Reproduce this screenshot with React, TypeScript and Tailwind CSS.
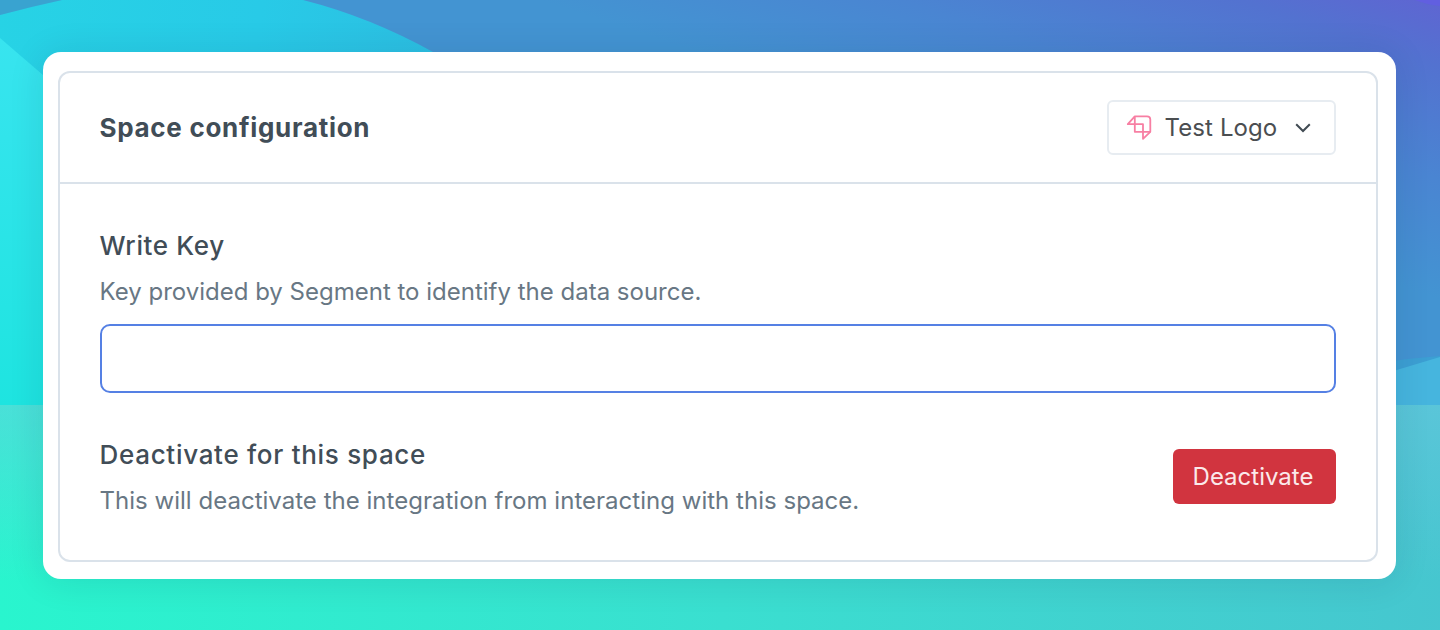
import React from "react";

function Backdrop() {
  return (
    <svg className="absolute inset-0 h-full w-full" viewBox="0 0 1440 630" preserveAspectRatio="none" aria-hidden="true">
      <defs>
        <linearGradient id="sky" gradientUnits="userSpaceOnUse" x1="1440" y1="0" x2="1350" y2="270">
          <stop offset="0" stopColor="#5f65d2" />
          <stop offset="0.22" stopColor="#5372d0" />
          <stop offset="0.6" stopColor="#4a85d2" />
          <stop offset="1" stopColor="#4394d2" />
        </linearGradient>
        <linearGradient id="arc" gradientUnits="userSpaceOnUse" x1="0" y1="0" x2="430" y2="60">
          <stop offset="0" stopColor="#27d3e5" />
          <stop offset="0.6" stopColor="#28cae7" />
          <stop offset="1" stopColor="#2cbfe2" />
        </linearGradient>
        <linearGradient id="side" gradientUnits="userSpaceOnUse" x1="0" y1="40" x2="0" y2="405">
          <stop offset="0" stopColor="#38e4ef" />
          <stop offset="1" stopColor="#1ee4e0" />
        </linearGradient>
        <linearGradient id="sea" gradientUnits="userSpaceOnUse" x1="0" y1="630" x2="1440" y2="520">
          <stop offset="0" stopColor="#29f5ce" />
          <stop offset="0.5" stopColor="#3adfd0" />
          <stop offset="1" stopColor="#46c6cf" />
        </linearGradient>
        <linearGradient id="haze" gradientUnits="userSpaceOnUse" x1="0" y1="405" x2="0" y2="580">
          <stop offset="0" stopColor="#76c4e6" stopOpacity="0.42" />
          <stop offset="1" stopColor="#76c4e6" stopOpacity="0" />
        </linearGradient>
      </defs>
      <rect width="1440" height="630" fill="url(#sky)" />
      <path d="M0 0H62L0 15Z" fill="#39a3d0" />
      <path d="M0 15Q30 7 62 0H303Q370 17 433 52L500 95V405H0Z" fill="url(#arc)" />
      <path d="M0 38L130 150V405H0Z" fill="url(#side)" />
      <path d="M1380 363Q1410 358 1440 356V405H1380Z" fill="#3c9fd3" />
      <path d="M1380 375Q1410 366 1440 357V405H1380Z" fill="#46b5de" />
      <rect y="405" width="1440" height="225" fill="url(#sea)" />
      <rect y="405" width="1440" height="225" fill="url(#haze)" />
      <path d="M1415 0Q1428 5 1440 6V0Z" fill="#615fe0" />
    </svg>
  );
}

function LogoMark() {
  return (
    <svg className="h-[40px] w-[40px] shrink-0" viewBox="0 0 40 40" fill="none" stroke="#f77fa3" strokeWidth="1.8" strokeLinejoin="round">
      <path d="M14.8 8.3H27Q30.3 8.3 30.3 11.6V23.8L23 30.8V16.2H7.8Z" />
      <path d="M14.8 8.3V23.8H30.3" />
    </svg>
  );
}

export default function App() {
  return (
    <main className="relative h-[630px] w-full overflow-hidden pt-[52px] pr-[44px] pl-[43px] font-['Inter',sans-serif]">
      <Backdrop />
      <div className="relative h-[527px] rounded-[18px] bg-white pt-[19px] pr-[18px] pl-[14.5px] shadow-[0_2px_36px_rgba(0,30,60,0.11)]">
        <section className="h-[491px] rounded-[12px] border-2 border-[#dae2ea]">
          <header className="flex h-[111px] items-center justify-between border-b-2 border-[#dae2ea] pr-[40.5px] pl-[40px]">
            <h1 className="text-[26px] leading-8 font-bold tracking-[0.7px] text-[#414d57]">Space configuration</h1>
            <button className="flex h-[55px] w-[229px] items-center rounded-[6px] border-2 border-[#e7ecf1] pl-[11px] text-[24px] text-[#4b4e51]">
              <LogoMark />
              <span className="ml-[5px] tracking-[0.1px]">Test Logo</span>
              <svg className="ml-[18px] h-[10px] w-[16px]" viewBox="0 0 16 10" fill="none" stroke="#414b53" strokeWidth="2">
                <path d="M1.2 1.3L8 8L14.8 1.3" />
              </svg>
            </button>
          </header>
          <div className="pt-[46px] pr-[40.5px] pl-[40px]">
            <label htmlFor="write-key" className="block text-[26px] leading-8 font-medium tracking-[0.65px] text-[#414d57]">Write Key</label>
            <p className="mt-[15px] text-[24px] leading-[30px] text-[#687784]">Key provided by Segment to identify the data source.</p>
            <input id="write-key" className="mt-[17px] block h-[69px] w-full rounded-[10px] border-2 border-[#5580e4] bg-white px-4 text-[24px] outline-none" />
            <div className="mt-[46px] flex items-start justify-between">
              <div>
                <h2 className="text-[26px] leading-8 font-medium tracking-[0.7px] text-[#414d57]">Deactivate for this space</h2>
                <p className="mt-[15px] text-[24px] leading-[30px] tracking-[0.02px] text-[#687784]">This will deactivate the integration from interacting with this space.</p>
              </div>
              <button className="mt-[10px] h-[55px] w-[163px] rounded-[6px] bg-[#d1343f] pr-[2px] text-[24px] text-[#fbe9ea]">Deactivate</button>
            </div>
          </div>
        </section>
      </div>
    </main>
  );
}
